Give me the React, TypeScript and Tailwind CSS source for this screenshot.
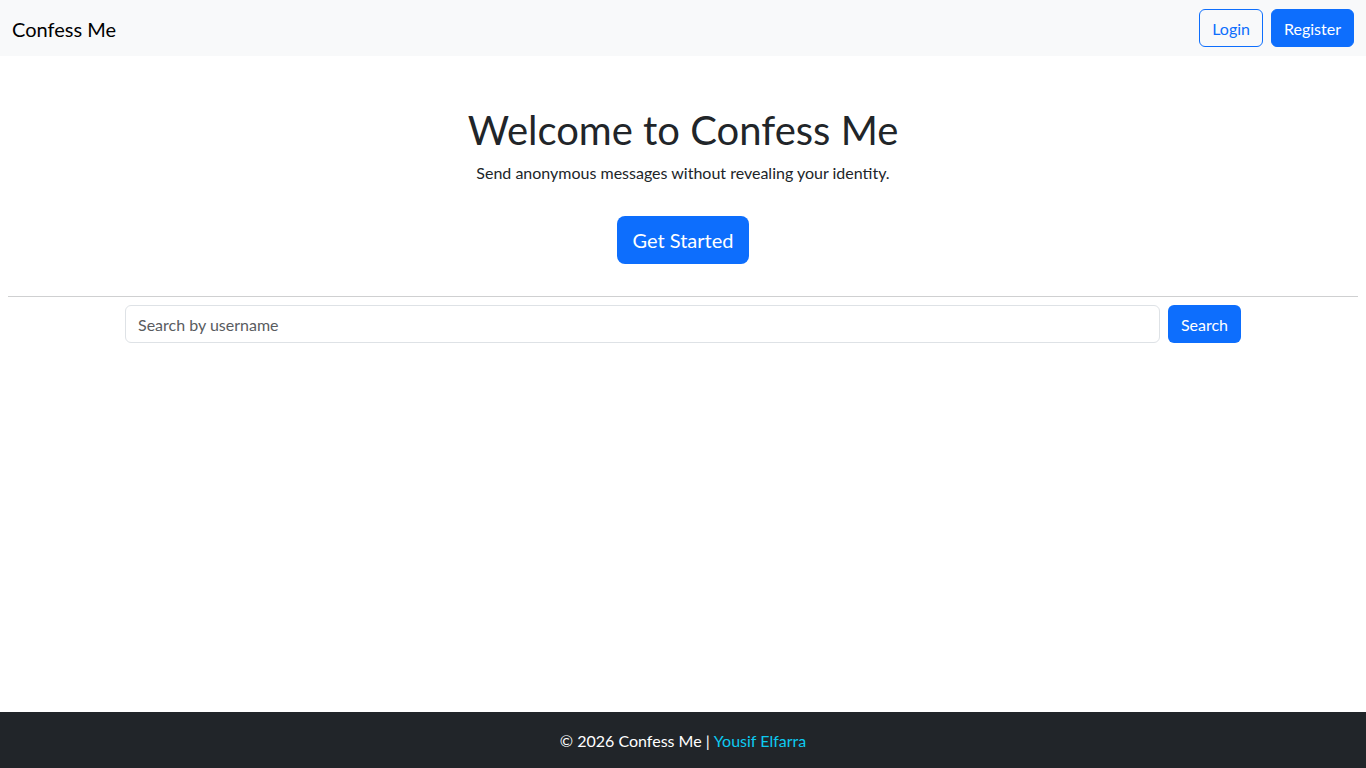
const fontStack = "font-['Lato','Noto_Sans','Liberation_Sans',sans-serif]";

function Navbar() {
  return (
    <nav className="flex h-14 items-center justify-between bg-[#f8f9fa] px-3">
      <a href="#" className="pt-0.5 text-[20px] leading-[30px] text-black">
        Confess Me
      </a>
      <div className="flex gap-2">
        <button className="h-[38px] rounded-md border border-[#0d6efd] px-3 pt-0.5 text-base text-[#0d6efd]">
          Login
        </button>
        <button className="h-[38px] rounded-md border border-[#0d6efd] bg-[#0d6efd] px-3 pt-0.5 text-base text-white">
          Register
        </button>
      </div>
    </nav>
  );
}

export default function App() {
  return (
    <div className={`flex min-h-screen flex-col bg-white text-[#212529] ${fontStack}`}>
      <Navbar />
      <main className="flex-1">
        <section className="flex flex-col items-center pt-[50px] text-center">
          <h1 className="mb-[7px] text-[40px] leading-[48px]">Welcome to Confess Me</h1>
          <p className="text-base leading-6">Send anonymous messages without revealing your identity.</p>
          <button className="mt-[31px] h-12 rounded-lg bg-[#0d6efd] px-4 text-[20px] text-white">
            Get Started
          </button>
        </section>
        <hr className="mx-2 mt-8 border-t border-[#cfd0d1]" />
        <form className="mx-auto mt-2 flex max-w-[1140px] gap-2 px-3">
          <input
            placeholder="Search by username"
            className="h-[38px] flex-1 rounded-md border border-[#dee2e6] px-3 text-base placeholder:text-[#595c5f] focus:outline-none"
          />
          <button type="button" className="h-[38px] rounded-md bg-[#0d6efd] px-[13px] pt-0.5 text-base text-white">
            Search
          </button>
        </form>
      </main>
      <footer className="flex h-14 items-center justify-center bg-[#212529] pt-0.5 text-base text-white">
        © 2026 Confess Me |&nbsp;<a href="#" className="text-[#0dcaf0]">Yousif Elfarra</a>
      </footer>
    </div>
  );
}
